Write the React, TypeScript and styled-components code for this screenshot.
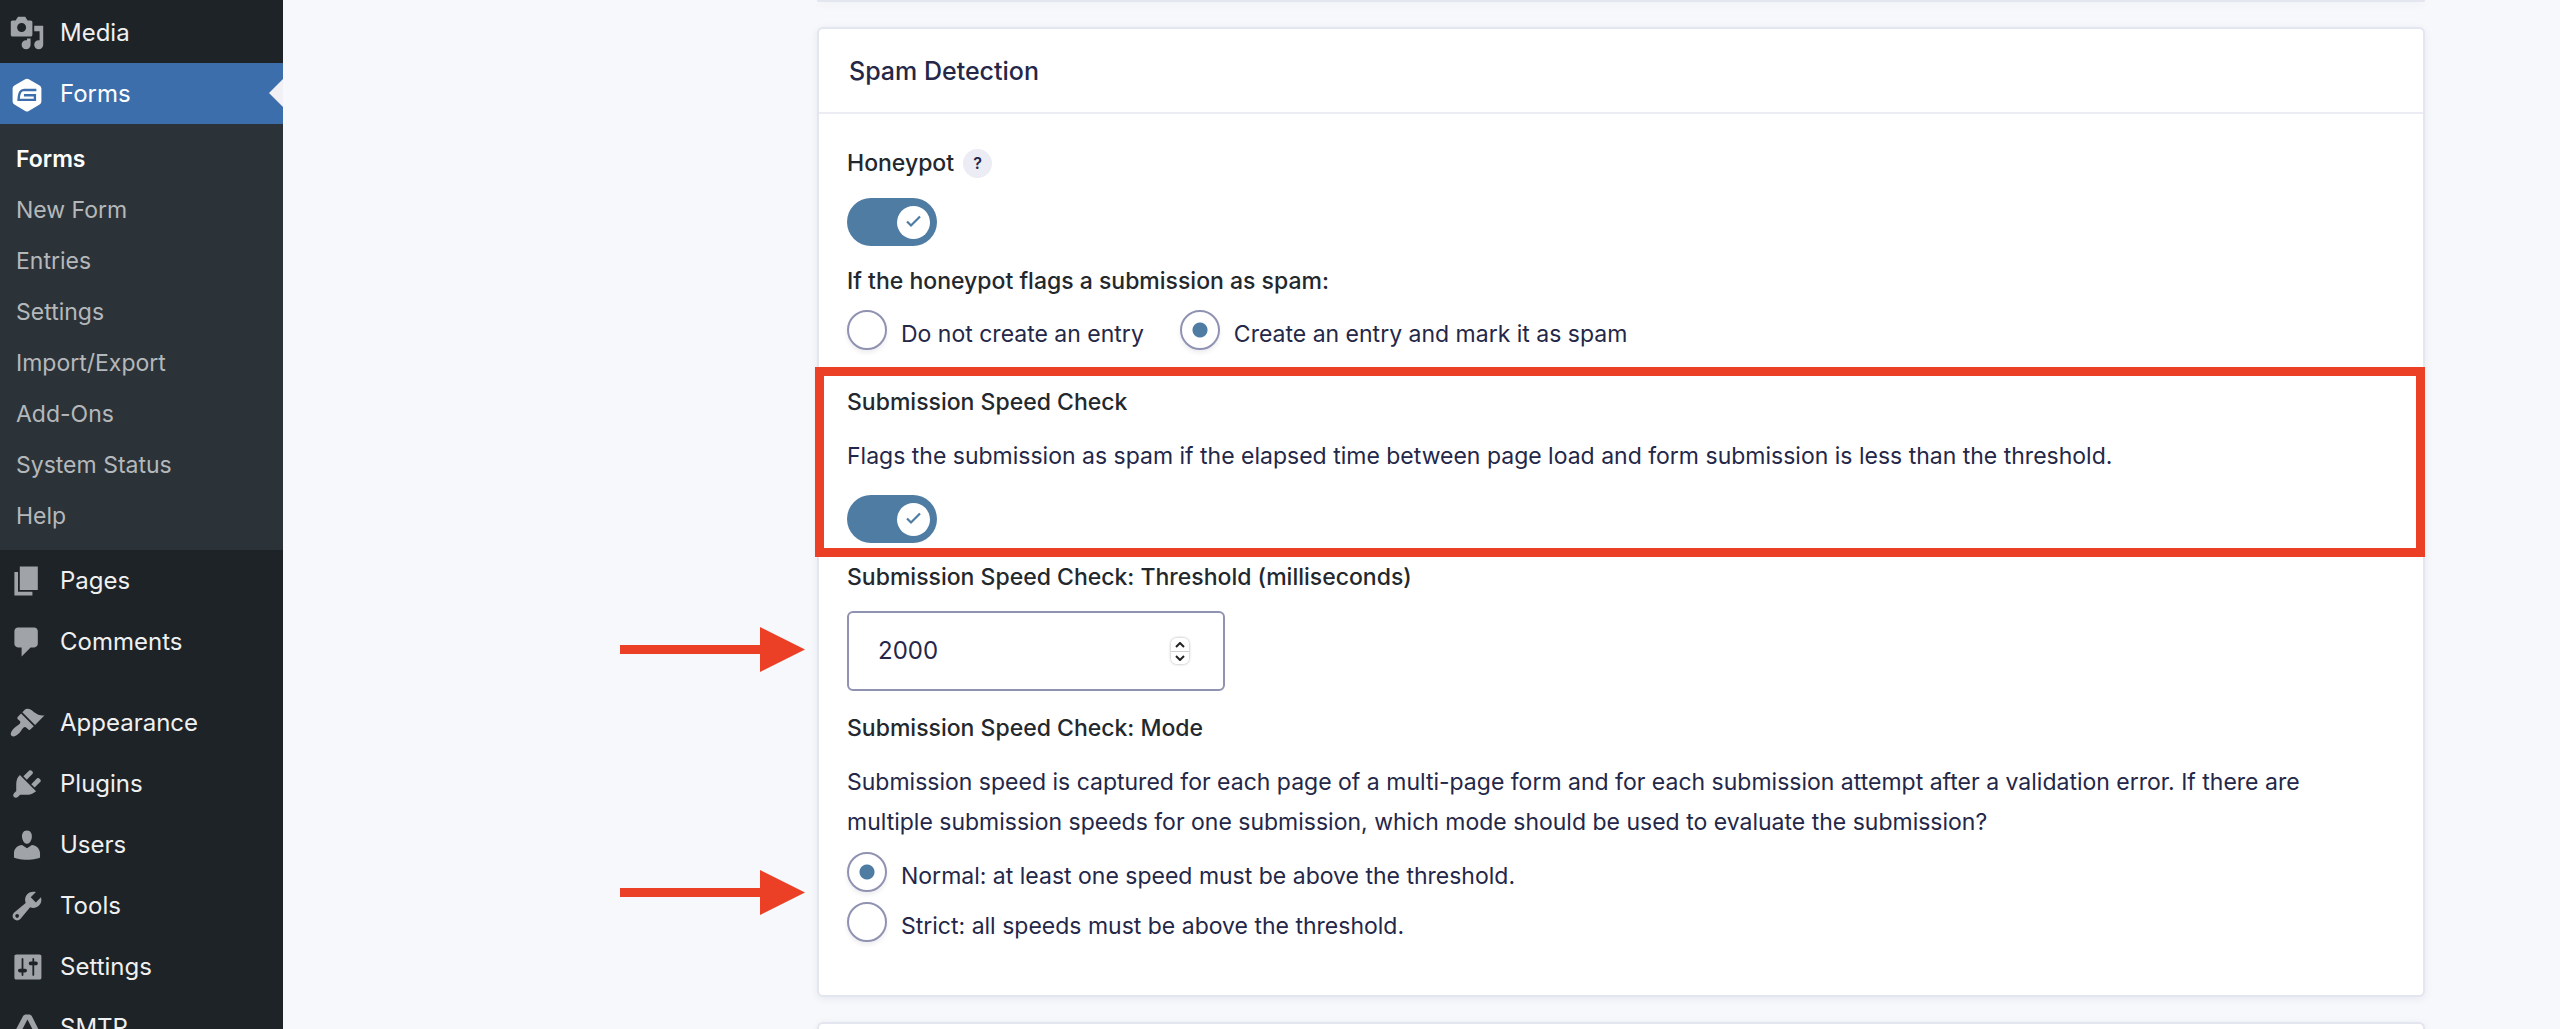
import React from "react";
import styled, { createGlobalStyle, css } from "styled-components";

const INK = "#242748";
const LABEL = "#23282d";
const BLUE = "#4f7ca3";
const RED = "#eb4026";
const EDGE = "#e3e6ef";

const GlobalStyle = createGlobalStyle`
  * { box-sizing: border-box; }
  html, body { margin: 0; height: 100%; }
  body {
    background: #f6f8fc;
    color: ${INK};
    font-family: Inter, "Liberation Sans", sans-serif;
    font-size: 23px;
    line-height: 40px;
    overflow: hidden;
  }
  #root { height: 100%; }
  h2, p, ul, fieldset, legend { margin: 0; padding: 0; border: 0; }
`;

const Page = styled.div`
  display: flex;
  height: 100vh;
  overflow: hidden;
`;

const Sidebar = styled.nav`
  flex: none;
  width: 283px;
  padding-top: 2px;
  background: #1d2327;
  overflow: hidden;
`;

const MenuList = styled.ul`
  list-style: none;
`;

const MenuItem = styled.li<{ $spaced?: boolean }>`
  margin-top: ${(p) => (p.$spaced ? "20px" : "0")};
`;

const MenuLink = styled.a<{ $current?: boolean }>`
  position: relative;
  display: flex;
  align-items: center;
  gap: 15px;
  height: 61px;
  padding-left: 9px;
  color: ${(p) => (p.$current ? "#fff" : "#f0f0f1")};
  background: ${(p) => (p.$current ? "#3c6eab" : "transparent")};
  font-size: 24px;
  text-decoration: none;
  svg {
    flex: none;
    width: 36px;
    height: 36px;
    fill: ${(p) => (p.$current ? "#fff" : "#a0a4a9")};
  }
  ${(p) =>
    p.$current &&
    css`
      &::after {
        content: "";
        position: absolute;
        right: 0;
        top: 16px;
        border: 14px solid transparent;
        border-left-width: 0;
        border-right-color: #f0f0f5;
      }
    `}
`;

const SubMenu = styled.ul`
  list-style: none;
  padding: 10px 0 8px;
  background: #2c3338;
`;

const SubLink = styled.a<{ $current?: boolean }>`
  display: block;
  padding: 0 16px;
  line-height: 51px;
  color: ${(p) => (p.$current ? "#fff" : "#b5b8bb")};
  font-weight: ${(p) => (p.$current ? 600 : 400)};
  text-decoration: none;
`;

const Main = styled.main`
  flex: 1;
  min-width: 0;
  padding: 0 135px 0 534px;
  display: flex;
  flex-direction: column;
  gap: 25px;
`;

const Card = styled.section`
  flex: none;
  border: 2px solid ${EDGE};
  border-radius: 6px;
  background: #fff;
  box-shadow: 0 2px 8px rgba(36, 39, 72, 0.07);
`;

const CardEnd = styled(Card)`
  height: 2px;
  border-top: 0;
  border-radius: 0 0 6px 6px;
`;

const CardHeader = styled.header`
  padding: 22px 30px 21px;
  border-bottom: 2px solid #ecedf4;
`;

const CardTitle = styled.h2`
  font-size: 25px;
  font-weight: 500;
`;

const CardBody = styled.div`
  padding: 29px 28px 53px;
`;

const Stack = styled.div<{ $gap: number }>`
  display: flex;
  flex-direction: column;
  gap: ${(p) => p.$gap}px;
`;

const Field = styled.fieldset<{ $gap: number }>`
  position: relative;
  min-width: 0;
  display: flex;
  flex-direction: column;
  gap: ${(p) => p.$gap}px;
`;

const labelText = css`
  color: ${LABEL};
  font-weight: 500;
`;

const Label = styled.label`
  display: block;
  ${labelText}
`;

const Legend = styled.legend`
  float: left;
  ${labelText}
`;

const LabelRow = styled.div`
  display: flex;
  align-items: center;
  gap: 9px;
`;

const Description = styled.p`
  padding-right: 48px;
`;

const HelpButton = styled.button`
  width: 29px;
  height: 29px;
  padding: 0;
  border: 0;
  border-radius: 50%;
  background: #ecedf4;
  color: ${INK};
  font: 600 16px/26px Inter, sans-serif;
`;

const Toggle = styled.span`
  position: relative;
  display: block;
  width: 90px;
  height: 48px;
  border-radius: 24px;
  background: ${BLUE};
  svg {
    position: absolute;
    top: 8px;
    right: 7px;
    width: 33px;
    height: 33px;
    pointer-events: none;
  }
`;

const ToggleInput = styled.input`
  appearance: none;
  display: block;
  width: 100%;
  height: 100%;
  margin: 0;
`;

const Options = styled.div<{ $column?: boolean }>`
  display: flex;
  flex-direction: ${(p) => (p.$column ? "column" : "row")};
  gap: ${(p) => (p.$column ? "10px" : "36px")};
`;

const Option = styled.label`
  display: flex;
  align-items: flex-start;
  gap: 14px;
  height: 40px;
`;

const OptionText = styled.span`
  padding-top: 4px;
`;

const Radio = styled.input`
  appearance: none;
  flex: none;
  width: 40px;
  height: 40px;
  margin: 0;
  border: 2px solid #9092b2;
  border-radius: 50%;
  background: #fff;
  box-shadow: 0 3px 4px rgba(36, 39, 72, 0.08);
  &:checked {
    background: radial-gradient(circle, ${BLUE} 7px, #fff 8px);
  }
`;

const Highlighted = styled(Stack)`
  position: relative;
  &::before {
    content: "";
    position: absolute;
    inset: -15px -30px -14px -32px;
    border: 9px solid ${RED};
    pointer-events: none;
  }
`;

const NumberBox = styled.div`
  display: flex;
  align-items: center;
  width: 378px;
  height: 80px;
  padding: 0 34px 0 29px;
  border: 2px solid #9092b2;
  border-radius: 6px;
`;

const NumberInput = styled.input`
  flex: 1;
  min-width: 0;
  padding: 0;
  border: 0;
  outline: 0;
  background: transparent;
  color: ${INK};
  font: 400 24px/40px Inter, sans-serif;
  appearance: textfield;
  &::-webkit-inner-spin-button { appearance: none; }
`;

const Spinner = styled.div`
  display: flex;
  flex-direction: column;
  width: 18px;
  border-radius: 6px;
  box-shadow: 0 0 3px rgba(0, 0, 0, 0.35);
  overflow: hidden;
`;

const Step = styled.button`
  display: flex;
  align-items: center;
  justify-content: center;
  height: 13px;
  padding: 0;
  border: 0;
  background: #fff;
  & + & { border-top: 1px solid #d0d0d0; }
  svg { width: 10px; height: 6px; }
`;

const Arrow = styled.svg<{ $bottom: number }>`
  position: absolute;
  right: calc(100% + 42px);
  bottom: ${(p) => p.$bottom}px;
  width: 185px;
  height: 45px;
  fill: ${RED};
`;

const icons = {
  media: <path d="M13 11V4c0-.55-.45-1-1-1h-1.67L9 1H5L3.67 3H2c-.55 0-1 .45-1 1v7c0 .55.45 1 1 1h10c.55 0 1-.45 1-1zM7 4.5c1.38 0 2.5 1.12 2.5 2.5S8.38 9.5 7 9.5 4.5 8.38 4.5 7 5.62 4.5 7 4.5zM14 6h5v10.5c0 1.38-1.12 2.5-2.5 2.5S14 17.88 14 16.5s1.12-2.5 2.5-2.5c.17 0 .34.02.5.05V9h-3V6zm-4 8.05V13h2v3.5c0 1.38-1.12 2.5-2.5 2.5S7 17.88 7 16.5 8.12 14 9.5 14c.17 0 .34.02.5.05z" />,
  forms: (
    <>
      <path d="M9 1.800a2 2 0 0 1 2 0l6 3.500a2 2 0 0 1 1 1.700v7.200a2 2 0 0 1-1 1.700l-6 3.500a2 2 0 0 1-2 0l-6-3.500a2 2 0 0 1-1-1.700V7a2 2 0 0 1 1-1.700z" />
      <path d="M15.200 7.800H8.400c-2 0-2.800 1.200-3.100 5.500h9.100V10.700H8.300" fill="none" stroke="#3c6eab" strokeWidth="1.300" />
    </>
  ),
  pages: <path d="M6 15V2h10v13H6zm-1 1h8v2H3V5h2v11z" />,
  comments: <path d="M5 2h9c1.100 0 2 .9 2 2v7c0 1.100-.9 2-2 2h-2l-5 5v-5H5c-1.100 0-2-.9-2-2V4c0-1.100.9-2 2-2z" />,
  appearance: <path d="M14.480 11.060L7.410 3.990l1.500-1.500c.5-.56 2.300-.47 3.510.32 1.210.8 1.430 1.280 2.910 2.100 1.180.64 2.450 1.260 4.450.85zm-.71.71L6.700 4.700 4.930 6.470c-.39.39-.39 1.020 0 1.410l1.060 1.060c.39.39.39 1.030 0 1.420-.6.6-1.430 1.110-2.210 1.690-.35.26-.7.53-1.010.84C1.430 14.230.4 16.080 1.400 17.070c.99 1 2.840-.03 4.180-1.360.31-.31.58-.66.85-1.020.57-.78 1.080-1.610 1.690-2.210.39-.39 1.020-.39 1.410 0l1.060 1.060c.39.39 1.020.39 1.410 0z" />,
  plugins: <path d="M13.110 4.360L9.870 7.600 8 5.730l3.240-3.240c.35-.34 1.050-.2 1.560.32.52.51.66 1.210.31 1.550zm-8 1.770l.91-1.120 9.010 9.010-1.190.84c-.71.71-2.630 1.160-3.820 1.160H6.140L4.900 17.260c-.59.59-1.540.59-2.120 0-.59-.58-.59-1.530 0-2.120l1.240-1.240v-3.880c0-1.130.4-3.190 1.090-3.890zm7.260 3.970l3.240-3.240c.34-.35 1.040-.21 1.550.31.52.51.66 1.210.31 1.550l-3.240 3.250z" />,
  users: <path d="M10 9.250c-2.270 0-2.730-3.440-2.730-3.440C7 4.020 7.820 2 9.970 2c2.160 0 2.980 2.020 2.710 3.810 0 0-.41 3.440-2.680 3.440zm0 2.570L12.720 10c2.390 0 4.520 2.330 4.520 4.530v2.490s-3.650 1.130-7.240 1.130c-3.650 0-7.240-1.130-7.240-1.130v-2.490c0-2.250 1.940-4.480 4.470-4.480z" />,
  tools: <path d="M16.680 9.770c-1.340 1.340-3.300 1.670-4.950.99l-5.410 6.520c-.99.99-2.590.99-3.580 0s-.99-2.590 0-3.570l6.520-5.420c-.68-1.650-.35-3.610.99-4.950 1.280-1.280 3.120-1.620 4.720-1.060l-2.890 2.890 2.820 2.820 2.860-2.870c.53 1.580.18 3.390-1.080 4.650zM3.810 16.210c.4.39 1.040.39 1.430 0 .4-.4.4-1.040 0-1.430-.39-.4-1.030-.4-1.430 0-.39.39-.39 1.030 0 1.430z" />,
  settings: <path d="M18 16V4c0-.55-.45-1-1-1H4c-.55 0-1 .45-1 1v12c0 .55.45 1 1 1h13c.55 0 1-.45 1-1zM8 11h1c.55 0 1 .45 1 1s-.45 1-1 1H8v1.500c0 .28-.22.5-.5.5s-.5-.22-.5-.5V13H6c-.55 0-1-.45-1-1s.45-1 1-1h1V5.500c0-.28.22-.5.5-.5s.5.22.5.5V11zm5-2h-1c-.55 0-1-.45-1-1s.45-1 1-1h1V5.500c0-.28.22-.5.5-.5s.5.22.5.5V7h1c.55 0 1 .45 1 1s-.45 1-1 1h-1v5.500c0 .28-.22.5-.5.5s-.5-.22-.5-.5V9z" />,
  smtp: <path d="M9 2.500h2.500l1.100.700L18 14h-3.200L10.250 5.300 5.700 14H2.200L7.900 3.200z" />,
};

type IconName = keyof typeof icons;

const menu: { icon: IconName; text: string; spaced?: boolean; sub?: string[] }[] = [
  { icon: "media", text: "Media" },
  {
    icon: "forms",
    text: "Forms",
    sub: ["Forms", "New Form", "Entries", "Settings", "Import/Export", "Add-Ons", "System Status", "Help"],
  },
  { icon: "pages", text: "Pages" },
  { icon: "comments", text: "Comments" },
  { icon: "appearance", text: "Appearance", spaced: true },
  { icon: "plugins", text: "Plugins" },
  { icon: "users", text: "Users" },
  { icon: "tools", text: "Tools" },
  { icon: "settings", text: "Settings" },
  { icon: "smtp", text: "SMTP" },
];

function Switch({ id }: { id: string }) {
  return (
    <Toggle>
      <ToggleInput type="checkbox" id={id} defaultChecked />
      <svg viewBox="0 0 33 33" aria-hidden="true">
        <circle cx="16.5" cy="16.5" r="16.5" fill="#fff" />
        <path d="M10 15.500l4 4 9-9" fill="none" stroke={BLUE} strokeWidth="2.200" />
      </svg>
    </Toggle>
  );
}

function PointerArrow({ bottom }: { bottom: number }) {
  return (
    <Arrow $bottom={bottom} viewBox="0 0 185 45" aria-hidden="true">
      <path d="M0 18h140V0l45 22.500L140 45V27H0z" />
    </Arrow>
  );
}

export default function App() {
  return (
    <Page>
      <GlobalStyle />
      <Sidebar>
        <MenuList>
          {menu.map((item) => (
            <MenuItem key={item.text} $spaced={item.spaced}>
              <MenuLink href="#" $current={!!item.sub}>
                <svg viewBox="0 0 20 20" aria-hidden="true">{icons[item.icon]}</svg>
                {item.text}
              </MenuLink>
              {item.sub && (
                <SubMenu>
                  {item.sub.map((text, i) => (
                    <li key={text}>
                      <SubLink href="#" $current={i === 0}>{text}</SubLink>
                    </li>
                  ))}
                </SubMenu>
              )}
            </MenuItem>
          ))}
        </MenuList>
      </Sidebar>
      <Main>
        <CardEnd />
        <Card>
          <CardHeader>
            <CardTitle>Spam Detection</CardTitle>
          </CardHeader>
          <CardBody>
            <Stack $gap={32}>
              <Stack $gap={15}>
                <LabelRow>
                  <Label htmlFor="honeypot">Honeypot</Label>
                  <HelpButton type="button">?</HelpButton>
                </LabelRow>
                <Switch id="honeypot" />
                <Field $gap={9}>
                  <Legend>If the honeypot flags a submission as spam:</Legend>
                  <Options>
                    <Option>
                      <Radio type="radio" name="action" />
                      <OptionText>Do not create an entry</OptionText>
                    </Option>
                    <Option>
                      <Radio type="radio" name="action" defaultChecked />
                      <OptionText>Create an entry and mark it as spam</OptionText>
                    </Option>
                  </Options>
                </Field>
              </Stack>
              <Stack $gap={14}>
                <Highlighted $gap={19}>
                  <Stack $gap={14}>
                    <Label htmlFor="speed">Submission Speed Check</Label>
                    <Description>
                      Flags the submission as spam if the elapsed time between page load and form submission is less than
                      the threshold.
                    </Description>
                  </Stack>
                  <Switch id="speed" />
                </Highlighted>
                <Stack $gap={17}>
                  <Field $gap={14}>
                    <Label htmlFor="threshold">Submission Speed Check: Threshold (milliseconds)</Label>
                    <NumberBox>
                      <NumberInput id="threshold" type="number" defaultValue={2000} />
                      <Spinner>
                        <Step type="button" aria-label="Increase">
                          <svg viewBox="0 0 10 6"><path d="M1 5l4-4 4 4" fill="none" stroke="#222" strokeWidth="2" /></svg>
                        </Step>
                        <Step type="button" aria-label="Decrease">
                          <svg viewBox="0 0 10 6"><path d="M1 1l4 4 4-4" fill="none" stroke="#222" strokeWidth="2" /></svg>
                        </Step>
                      </Spinner>
                    </NumberBox>
                    <PointerArrow bottom={19} />
                  </Field>
                  <Field $gap={14}>
                    <Legend>Submission Speed Check: Mode</Legend>
                    <Stack $gap={10}>
                      <Description>
                        Submission speed is captured for each page of a multi-page form and for each submission attempt
                        after a validation error. If there are multiple submission speeds for one submission, which mode
                        should be used to evaluate the submission?
                      </Description>
                      <Options $column>
                        <Option>
                          <Radio type="radio" name="mode" defaultChecked />
                          <OptionText>Normal: at least one speed must be above the threshold.</OptionText>
                        </Option>
                        <Option>
                          <Radio type="radio" name="mode" />
                          <OptionText>Strict: all speeds must be above the threshold.</OptionText>
                        </Option>
                      </Options>
                    </Stack>
                    <PointerArrow bottom={27} />
                  </Field>
                </Stack>
              </Stack>
            </Stack>
          </CardBody>
        </Card>
        <Card>
          <CardHeader />
        </Card>
      </Main>
    </Page>
  );
}
